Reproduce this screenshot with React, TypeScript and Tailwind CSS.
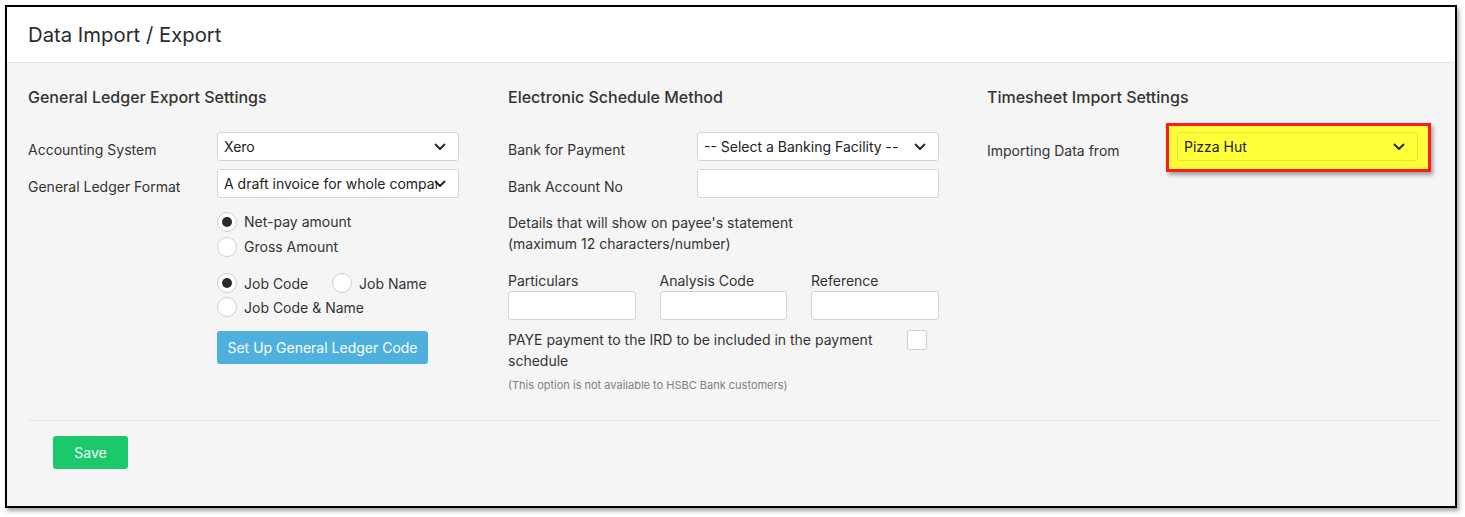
import React from 'react'

function Chevron() {
  return (
    <svg width="12" height="8" viewBox="0 0 12 8" fill="none" className="shrink-0">
      <path d="M1.5 1.5 L6 6 L10.5 1.5" stroke="#222" strokeWidth="1.8" strokeLinecap="round" strokeLinejoin="round" />
    </svg>
  )
}

function Select({ value, className = '' }: { value: string; className?: string }) {
  return (
    <div className={`relative flex h-[29px] w-[242px] items-center rounded-[3px] border border-[#d4d4d4] bg-white pl-[6px] pr-[21px] ${className}`}>
      <span className="overflow-hidden whitespace-nowrap text-[14px] text-[#222]">{value}</span>
      <span className="absolute right-[12px] top-1/2 -translate-y-1/2">
        <Chevron />
      </span>
    </div>
  )
}

function Input({ w = 'w-[242px]' }: { w?: string }) {
  return <div className={`h-[29px] ${w} rounded-[3px] border border-[#d4d4d4] bg-white`} />
}

function Radio({ checked, label, className = '' }: { checked?: boolean; label: string; className?: string }) {
  return (
    <label className={`flex items-center gap-[7px] ${className}`}>
      <span className="flex h-[20px] w-[20px] items-center justify-center rounded-full border border-[#cfcfcf] bg-white">
        {checked && <span className="h-[10px] w-[10px] rounded-full bg-[#2b2b2b]" />}
      </span>
      <span className="text-[14px] text-[#333]">{label}</span>
    </label>
  )
}

function FieldRow({ label, children }: { label: string; children: React.ReactNode }) {
  return (
    <div className="flex items-center">
      <span className="w-[189px] shrink-0 pt-[5px] text-[14px] text-[#333]">{label}</span>
      {children}
    </div>
  )
}

export default function App() {
  return (
    <div className="h-[517px] w-[1465px] bg-white pl-[5px] pt-[5px] font-['Inter',sans-serif]">
      <div className="flex h-[503px] w-[1452px] flex-col border-2 border-black bg-[#f5f5f5] shadow-[2px_3px_4px_rgba(0,0,0,0.35)]">
        <div className="flex h-[56px] items-center border-b border-[#e6e6e6] bg-white pl-[21px]">
          <h1 className="pt-[2px] text-[20.3px] text-[#2b2b2b]">Data Import / Export</h1>
        </div>

        <div className="pl-[21px] pr-[13px] pt-[22px]">
          <div className="grid grid-cols-[480px_479px_1fr]">
            {/* General Ledger */}
            <div>
              <h2 className="h-[24px] text-[16px] font-medium leading-[24px] text-[#333]">General Ledger Export Settings</h2>
              <div className="mt-[23px] flex flex-col gap-[8px]">
                <FieldRow label="Accounting System">
                  <Select value="Xero" />
                </FieldRow>
                <FieldRow label="General Ledger Format">
                  <Select value="A draft invoice for whole company" />
                </FieldRow>
              </div>
              <div className="ml-[189px] mt-[11px] flex flex-col">
                <Radio checked label="Net-pay amount" className="h-[25px]" />
                <Radio label="Gross Amount" className="h-[25px]" />
                <div className="mt-[12px] flex h-[24px] items-center">
                  <Radio checked label="Job Code" className="w-[115px]" />
                  <Radio label="Job Name" />
                </div>
                <Radio label="Job Code & Name" className="h-[24px]" />
                <button className="mt-[12px] h-[33px] w-[211px] rounded-[3px] bg-[#4eb0dc] text-[14px] text-white">
                  Set Up General Ledger Code
                </button>
              </div>
            </div>

            {/* Electronic Schedule */}
            <div>
              <h2 className="h-[24px] text-[16px] font-medium leading-[24px] text-[#333]">Electronic Schedule Method</h2>
              <div className="mt-[23px] flex flex-col gap-[8px]">
                <FieldRow label="Bank for Payment">
                  <Select value="-- Select a Banking Facility --" />
                </FieldRow>
                <FieldRow label="Bank Account No">
                  <Input />
                </FieldRow>
              </div>
              <p className="mt-[14px] text-[14px] leading-[21px] text-[#333]">
                Details that will show on payee's statement
                <br />
                (maximum 12 characters/number)
              </p>
              <div className="mt-[17px] flex gap-[24px]">
                {['Particulars', 'Analysis Code', 'Reference'].map((l) => (
                  <div key={l} className="flex flex-col">
                    <span className="h-[20px] text-[14px] leading-[20px] text-[#333]">{l}</span>
                    <Input w="w-[127.5px]" />
                  </div>
                ))}
              </div>
              <div className="mt-[9px] flex items-start">
                <p className="w-[399px] text-[14px] leading-[21px] text-[#333]">
                  PAYE payment to the IRD to be included in the payment schedule
                </p>
                <span className="mt-[1px] h-[20px] w-[20px] rounded-[3px] border border-[#cfcfcf] bg-white" />
              </div>
              <p className="mt-[7px] text-[11px] leading-[14px] text-[#808080]">
                (This option is not available to HSBC Bank customers)
              </p>
            </div>

            {/* Timesheet */}
            <div>
              <h2 className="h-[24px] text-[16px] font-medium leading-[24px] text-[#333]">Timesheet Import Settings</h2>
              <div className="mt-[23px] flex items-center">
                <span className="w-[179px] shrink-0 pt-[5px] text-[14px] text-[#333]">Importing Data from</span>
                <div className="-my-[9px] border-[3px] border-[#ff1a1a] bg-[#ffff3a] pb-[8px] pl-[8px] pr-[10px] pt-[6px] shadow-[2px_3px_4px_rgba(0,0,0,0.35)]">
                  <Select value="Pizza Hut" className="!w-[241px] !border-[#e3e330] !bg-[#ffff3a]" />
                </div>
              </div>
            </div>
          </div>

          <div className="mt-[28px] border-t border-[#e6e6e6]" />
          <button className="ml-[25px] mt-[15px] h-[33px] w-[75px] rounded-[3px] bg-[#1bc86b] text-[14px] text-white">
            Save
          </button>
        </div>
      </div>
    </div>
  )
}
